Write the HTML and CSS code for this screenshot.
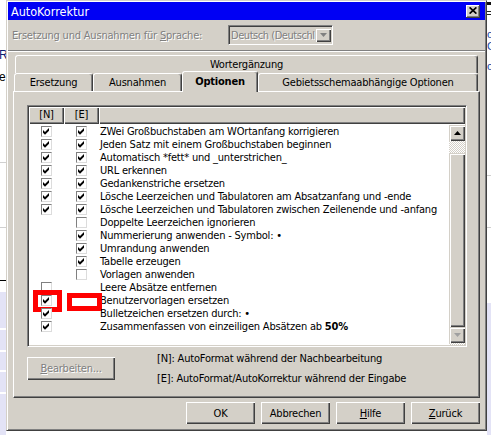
FILE: index.html
```html
<!DOCTYPE html>
<html lang="de">
<head>
    <meta charset="UTF-8">
    <title>AutoKorrektur</title>
    <link rel="stylesheet" href="styles.css">
</head>
<body>

<svg class="defs" width="0" height="0">
    <symbol id="tick" viewBox="0 0 7 7"><polygon points="0,2 2,4 6,0 6,2.8 2,6.8 0,4.8"/></symbol>
</svg>

<div class="desk">
    <div class="behind behind-left">
        <span class="bg-glyph glyph-r">R</span>
        <span class="bg-glyph glyph-e">e</span>
    </div>

    <div class="dialog">
        <div class="titlebar">
            <span class="title">AutoKorrektur</span>
            <span class="close">
                <svg width="8" height="7" viewBox="0 0 8 7"><path d="M0.6 0.4 L7.4 6.6 M7.4 0.4 L0.6 6.6" stroke="#000" stroke-width="1.7"/></svg>
            </span>
        </div>

        <div class="lang-row">
            <span class="lang-label disabled">Ersetzung und Ausnahmen für <u>S</u>prache:</span>
            <div class="combo">
                <span class="combo-text disabled">Deutsch (Deutschl</span>
                <span class="combo-drop">
                    <svg width="7" height="4" viewBox="0 0 7 4"><polygon points="0,0 7,0 3.5,4" fill="#808080"/></svg>
                </span>
            </div>
        </div>

        <div class="separator"></div>

        <div class="tab-row tab-row-back">
            <div class="tab tab-wide">Wortergänzung</div>
        </div>
        <div class="tab-row tab-row-front">
            <div class="tab tab-ersetzung">Ersetzung</div>
            <div class="tab tab-ausnahmen">Ausnahmen</div>
            <div class="tab tab-optionen active">Optionen</div>
            <div class="tab tab-gebiet">Gebietsschemaabhängige Optionen</div>
        </div>

        <div class="panel">
            <div class="listbox">
                <div class="list-head">
                    <span class="head-cell">[N]</span>
                    <span class="head-cell">[E]</span>
                    <span class="head-cell"></span>
                </div>
                <div class="list-body">
                    <div class="rows">
                        <div class="row">
                            <span class="cb"><svg><use href="#tick"/></svg></span>
                            <span class="cb"><svg><use href="#tick"/></svg></span>
                            <span class="label">ZWei Großbuchstaben am WOrtanfang korrigieren</span>
                        </div>
                        <div class="row">
                            <span class="cb"><svg><use href="#tick"/></svg></span>
                            <span class="cb"><svg><use href="#tick"/></svg></span>
                            <span class="label">Jeden Satz mit einem Großbuchstaben beginnen</span>
                        </div>
                        <div class="row">
                            <span class="cb"><svg><use href="#tick"/></svg></span>
                            <span class="cb"><svg><use href="#tick"/></svg></span>
                            <span class="label">Automatisch *fett* und _unterstrichen_</span>
                        </div>
                        <div class="row">
                            <span class="cb"><svg><use href="#tick"/></svg></span>
                            <span class="cb"><svg><use href="#tick"/></svg></span>
                            <span class="label">URL erkennen</span>
                        </div>
                        <div class="row">
                            <span class="cb"><svg><use href="#tick"/></svg></span>
                            <span class="cb"><svg><use href="#tick"/></svg></span>
                            <span class="label">Gedankenstriche ersetzen</span>
                        </div>
                        <div class="row">
                            <span class="cb"><svg><use href="#tick"/></svg></span>
                            <span class="cb"><svg><use href="#tick"/></svg></span>
                            <span class="label">Lösche Leerzeichen und Tabulatoren am Absatzanfang und -ende</span>
                        </div>
                        <div class="row">
                            <span class="cb"><svg><use href="#tick"/></svg></span>
                            <span class="cb"><svg><use href="#tick"/></svg></span>
                            <span class="label">Lösche Leerzeichen und Tabulatoren zwischen Zeilenende und -anfang</span>
                        </div>
                        <div class="row">
                            <span class="none"></span>
                            <span class="cb"></span>
                            <span class="label">Doppelte Leerzeichen ignorieren</span>
                        </div>
                        <div class="row">
                            <span class="none"></span>
                            <span class="cb"><svg><use href="#tick"/></svg></span>
                            <span class="label">Nummerierung anwenden - Symbol: •</span>
                        </div>
                        <div class="row">
                            <span class="none"></span>
                            <span class="cb"><svg><use href="#tick"/></svg></span>
                            <span class="label">Umrandung anwenden</span>
                        </div>
                        <div class="row">
                            <span class="none"></span>
                            <span class="cb"><svg><use href="#tick"/></svg></span>
                            <span class="label">Tabelle erzeugen</span>
                        </div>
                        <div class="row">
                            <span class="none"></span>
                            <span class="cb"></span>
                            <span class="label">Vorlagen anwenden</span>
                        </div>
                        <div class="row">
                            <span class="cb"></span>
                            <span class="none"></span>
                            <span class="label">Leere Absätze entfernen</span>
                        </div>
                        <div class="row">
                            <span class="cb"><svg><use href="#tick"/></svg></span>
                            <span class="none"></span>
                            <span class="label">Benutzervorlagen ersetzen</span>
                            <span class="mark mark-n"></span>
                            <span class="mark mark-e"></span>
                        </div>
                        <div class="row">
                            <span class="cb"><svg><use href="#tick"/></svg></span>
                            <span class="none"></span>
                            <span class="label">Bulletzeichen ersetzen durch: •</span>
                        </div>
                        <div class="row">
                            <span class="cb"><svg><use href="#tick"/></svg></span>
                            <span class="none"></span>
                            <span class="label">Zusammenfassen von einzeiligen Absätzen ab <b>50%</b></span>
                        </div>
                    </div>

                    <div class="scrollbar">
                        <span class="sb-btn">
                            <svg width="7" height="4" viewBox="0 0 7 4"><polygon points="3.5,0 7,4 0,4" fill="#000"/></svg>
                        </span>
                        <span class="sb-gap"></span>
                        <span class="sb-thumb"></span>
                        <span class="sb-btn">
                            <svg width="7" height="4" viewBox="0 0 7 4"><polygon points="0,0 7,0 3.5,4" fill="#a0a0a0"/></svg>
                        </span>
                    </div>
                </div>
            </div>

            <div class="panel-foot">
                <button class="btn btn-edit disabled" disabled><u>B</u>earbeiten...</button>
                <div class="legend">
                    <p>[N]: AutoFormat während der Nachbearbeitung</p>
                    <p>[E]: AutoFormat/AutoKorrektur während der Eingabe</p>
                </div>
            </div>
        </div>

        <div class="buttons">
            <button class="btn">OK</button>
            <button class="btn">Abbrechen</button>
            <button class="btn"><u>H</u>ilfe</button>
            <button class="btn"><u>Z</u>urück</button>
        </div>
    </div>

    <div class="behind behind-right">
        <span class="bg-glyph glyph-blue glyph-first">o</span>
        <span class="bg-glyph glyph-blue">C</span>
        <span class="bg-glyph glyph-blue glyph-last">o</span>
    </div>
</div>

</body>
</html>
```

FILE: styles.css
```css
* {
    box-sizing: border-box;
}

body {
    margin: 0;
    width: 491px;
    height: 435px;
    overflow: hidden;
    background: #fff;
    font-family: "DejaVu Sans Condensed", "Liberation Sans", sans-serif;
    font-size: 11px;
    letter-spacing: -0.2px;
    color: #000;
}

.defs {
    position: absolute;
}

.desk {
    display: flex;
    height: 435px;
}

/* bits of the windows lying behind the dialog */
.behind {
    flex: none;
    height: 435px;
    overflow: hidden;
    display: flex;
    flex-direction: column;
}

.behind-left {
    width: 6px;
    background: linear-gradient(to bottom,
        #fff 0 162px, #d0d0d0 162px 163px,
        #fff 163px 227px, #d0d0d0 227px 228px,
        #fff 228px 280px, #000 280px 281px,
        #fff 281px 292px, #e3e3f6 292px 328px,
        #fff 328px 330px, #e3e3f6 330px 350px,
        #fff 350px 352px, #e3e3f6 352px 370px,
        #fff 370px 372px, #e3e3f6 372px 392px,
        #fff 392px 394px, #e3e3f6 394px 435px);
}

.behind-right {
    width: 4px;
    background: linear-gradient(to bottom,
        #fff 0 2px, #111 2px 5px,
        #fff 5px 11px, #222 11px 12px,
        #fff 12px 14px, #222 14px 15px,
        #fff 15px 175px, #d0d0d0 175px 176px,
        #fff 176px 227px, #d0d0d0 227px 228px,
        #fff 228px 303px, #e3e3f6 303px 435px);
}

.bg-glyph {
    font-family: "Liberation Sans", sans-serif;
    font-size: 12px;
    line-height: 12px;
    height: 12px;
    flex: none;
}

.glyph-r {
    margin-top: 49px;
    margin-left: -1px;
    color: #102070;
}

.glyph-e {
    margin-top: 10px;
    margin-left: -1px;
}

.glyph-blue {
    color: #1a4aa8;
    font-size: 11px;
}

.glyph-first {
    margin-top: 28px;
}

.glyph-last {
    margin-top: 8px;
}

/* dialog frame */
.dialog {
    flex: none;
    width: 481px;
    height: 431px;
    padding: 1px;
    background: #d4d0c8;
    border: 1px solid;
    border-color: #d4d0c8 #404040 #404040 #d4d0c8;
    box-shadow: inset 1px 1px #fff, inset -1px -1px #808080;
    display: flex;
    flex-direction: column;
}

.titlebar {
    height: 18px;
    flex: none;
    background: #0000f4;
    color: #fff;
    display: flex;
    align-items: center;
    justify-content: space-between;
    padding: 0 5px 0 3px;
}

.title {
    font-size: 12.5px;
    letter-spacing: 0;
}

.close {
    width: 14px;
    height: 13px;
    background: #d4d0c8;
    box-shadow: inset -1px -1px #404040, inset 1px 1px #fff, inset -2px -2px #808080;
    display: flex;
    align-items: center;
    justify-content: center;
    padding-bottom: 1px;
}

.disabled {
    color: #808080;
    text-shadow: 1px 1px #fff;
}

.lang-row {
    display: flex;
    align-items: center;
    height: 20px;
    margin-top: 5px;
    padding-left: 4px;
}

.lang-label {
    width: 216px;
    flex: none;
}

.combo {
    width: 105px;
    height: 20px;
    display: flex;
    padding: 2px 1px 2px 2px;
    border: 1px solid;
    border-color: #808080 #fff #fff #808080;
    box-shadow: inset 1px 1px #404040, inset -1px -1px #d4d0c8;
}

.combo-text {
    flex: 1;
    overflow: hidden;
    white-space: nowrap;
    letter-spacing: -0.45px;
    line-height: 15px;
}

.combo-drop {
    width: 16px;
    flex: none;
    display: flex;
    align-items: center;
    justify-content: center;
    box-shadow: inset 1px 1px #d4d0c8, inset 2px 2px #fff, inset -1px -1px #404040, inset -2px -2px #808080;
}

.separator {
    height: 2px;
    margin-top: 5px;
    border-top: 1px solid #808080;
    border-bottom: 1px solid #fff;
}

/* tabs, two rows */
.tab-row {
    display: flex;
    align-items: flex-end;
    height: 18px;
}

.tab-row-back {
    margin-top: 3px;
    margin-left: 7px;
    width: 463px;
}

.tab-row-front {
    margin-left: 6px;
    width: 464px;
}

.tab {
    height: 18px;
    border: 1px solid;
    border-bottom: none;
    border-color: #fff #404040 transparent #fff;
    border-radius: 3px 3px 0 0;
    box-shadow: inset -1px 0 #808080;
    background: #d4d0c8;
    text-align: center;
    line-height: 17px;
    white-space: nowrap;
}

.tab-wide { width: 463px; }
.tab-ersetzung { width: 79px; }
.tab-ausnahmen { width: 89px; }
.tab-optionen { width: 76px; }
.tab-gebiet { width: 220px; }

.tab.active {
    position: relative;
    z-index: 2;
    height: 21px;
    margin-bottom: -1px;
    font-weight: bold;
    line-height: 19px;
}

.panel {
    margin-left: 5px;
    width: 467px;
    height: 307px;
    flex: none;
    border: 1px solid;
    border-color: #fff #404040 #404040 #fff;
    box-shadow: inset -1px -1px #808080;
    padding: 13px 0 0 13px;
}

/* check list */
.listbox {
    width: 440px;
    height: 242px;
    padding: 1px;
    border: 1px solid;
    border-color: #808080 #fff #fff #808080;
    box-shadow: inset 1px 1px #404040, inset -1px -1px #d4d0c8;
    display: flex;
    flex-direction: column;
}

.list-head {
    display: grid;
    grid-template-columns: 35px 35px 1fr;
    height: 17px;
    flex: none;
}

.head-cell {
    text-align: center;
    line-height: 16px;
    box-shadow: inset 1px 1px #fff, inset -1px -1px #404040, inset -2px -2px #808080;
}

.list-body {
    flex: 1;
    display: flex;
    background: #fff;
    padding-top: 1px;
    overflow: hidden;
}

.rows {
    flex: 1;
}

.row {
    position: relative;
    display: grid;
    grid-template-columns: 35px 35px 1fr;
    height: 13px;
    line-height: 13px;
}

.row .label {
    padding-left: 1px;
    white-space: nowrap;
}

.cb {
    width: 11px;
    height: 11px;
    justify-self: center;
    align-self: center;
    background: #fff;
    border: 1px solid;
    border-color: #808080 #dcdcdc #dcdcdc #808080;
    display: flex;
    align-items: center;
    justify-content: center;
}

.cb svg {
    width: 7px;
    height: 7px;
}

.mark {
    position: absolute;
    border: 5px solid #ff0000;
}

.mark-n {
    left: 4px;
    top: -4px;
    width: 29px;
    height: 22px;
}

.mark-e {
    left: 38px;
    top: -1px;
    width: 35px;
    height: 18px;
}

.scrollbar {
    width: 16px;
    flex: none;
    display: flex;
    flex-direction: column;
    background: repeating-conic-gradient(#fff 0 25%, #d4d0c8 0 50%) 0 0 / 2px 2px;
}

.sb-btn,
.sb-thumb {
    background: #d4d0c8;
    box-shadow: inset 1px 1px #d4d0c8, inset 2px 2px #fff, inset -1px -1px #404040, inset -2px -2px #808080;
}

.sb-btn {
    height: 16px;
    display: flex;
    align-items: center;
    justify-content: center;
}

.sb-gap {
    height: 12px;
}

.sb-thumb {
    height: 174px;
}

.panel-foot {
    display: flex;
    margin-top: 5px;
}

.legend {
    margin-left: 42px;
}

.legend p {
    margin: 0 0 7px;
    line-height: 13px;
}

/* push buttons */
.btn {
    font-family: inherit;
    font-size: 11px;
    letter-spacing: inherit;
    color: #000;
    background: #d4d0c8;
    border: none;
    padding: 0;
    box-shadow: inset 1px 1px #fff, inset -1px -1px #404040, inset -2px -2px #808080;
}

.btn.disabled {
    color: #808080;
}

.btn-edit {
    width: 88px;
    height: 23px;
    margin-top: 5px;
}

.buttons {
    display: flex;
    justify-content: flex-end;
    gap: 6px;
    margin-top: 4px;
    padding-right: 5px;
}

.buttons .btn {
    width: 69px;
    height: 22px;
}
```
